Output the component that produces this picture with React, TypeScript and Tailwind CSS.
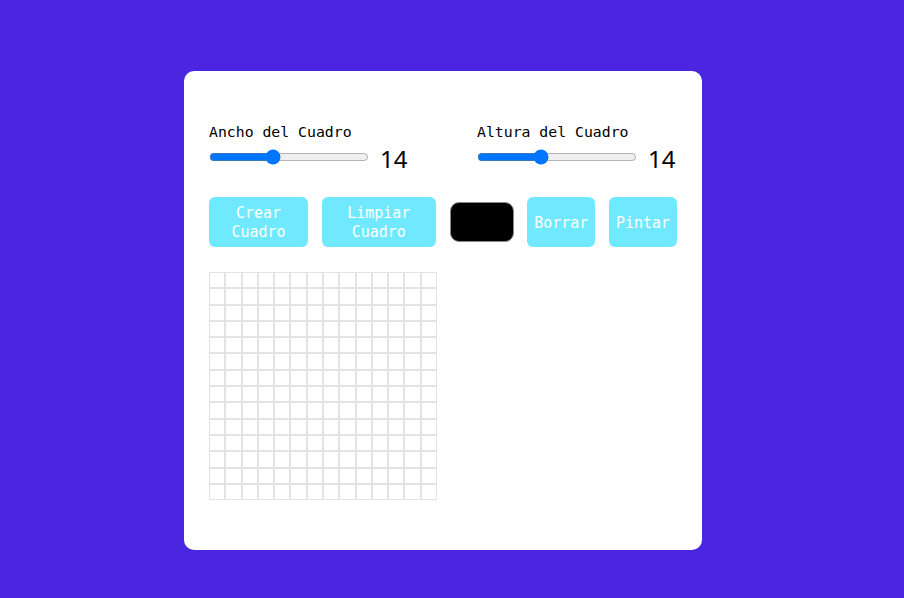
import { useState } from "react"

const mono = { fontFamily: '"DejaVu Sans Mono", "Liberation Mono", monospace' }

function SizeControl({ label, value, onChange }: { label: string; value: number; onChange: (v: number) => void }) {
  return (
    <div className="flex w-[200px] flex-col">
      <label className="text-[14.8px] leading-[18px] text-black" style={mono}>
        {label}
      </label>
      <div className="flex items-center">
        <input
          type="range"
          min={5}
          max={28}
          value={value}
          onChange={(e) => onChange(Number(e.target.value))}
          className="m-0 h-[16px] w-[160px]"
        />
        <span className="ml-[11px] pt-[4px] text-[24px] leading-[28px] text-black" style={{ fontFamily: '"Noto Sans", sans-serif' }}>
          {value}
        </span>
      </div>
    </div>
  )
}

export default function App() {
  const [width, setWidth] = useState(14)
  const [height, setHeight] = useState(14)

  return (
    <div className="flex min-h-[598px] w-full items-start justify-center bg-[#4a26e1] pr-[18px] pt-[71px]">
      <div className="flex h-[479px] w-[518px] flex-col rounded-[10px] bg-white px-[25px] pt-[52px]">
        <div className="flex justify-between">
          <SizeControl label="Ancho del Cuadro" value={width} onChange={setWidth} />
          <SizeControl label="Altura del Cuadro" value={height} onChange={setHeight} />
        </div>

        <div className="mt-[24px] flex items-center justify-between" style={mono}>
          <button className="h-[50px] w-[99px] rounded-[6px] bg-[#70e9ff] pt-[2px] text-[15px] leading-[19px] text-white">
            Crear Cuadro
          </button>
          <button className="h-[50px] w-[114px] rounded-[6px] bg-[#70e9ff] pt-[2px] text-[15px] leading-[19px] text-white">
            Limpiar Cuadro
          </button>
          <div className="h-[40px] w-[64px] rounded-[9px] border border-[#8a8a8a] bg-black" />
          <button className="h-[50px] w-[68px] rounded-[6px] bg-[#70e9ff] pt-[2px] text-[15px] leading-[19px] text-white">
            Borrar
          </button>
          <button className="h-[50px] w-[68px] rounded-[6px] bg-[#70e9ff] pt-[2px] text-[15px] leading-[19px] text-white">
            Pintar
          </button>
        </div>

        <div
          className="mt-[25px] grid w-[228px]"
          style={{ gridTemplateColumns: `repeat(${width}, 1fr)` }}
        >
          {Array.from({ length: width * height }).map((_, i) => (
            <div key={i} className="h-[16.3px] border border-[#e3e3e3] bg-white" />
          ))}
        </div>
      </div>
    </div>
  )
}
